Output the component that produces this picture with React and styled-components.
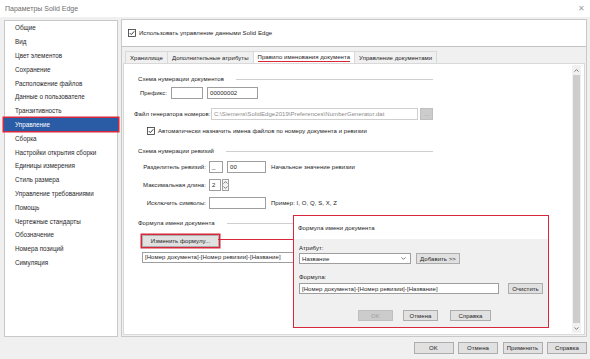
import React from "react";
import styled, { createGlobalStyle } from "styled-components";

const Global = createGlobalStyle`
  html, body { margin: 0; padding: 0; background: #f0f0f0; }
  body { font-family: "Liberation Sans", Arial, sans-serif; font-size: 6px; letter-spacing: 0.06px; color: #1a1a1a; }
  * { box-sizing: border-box; }
`;

const RED = "#d8263a";

const Window = styled.div`
  position: relative;
  width: 590px;
  height: 359px;
  background: #f0f0f0;
  display: flex;
  flex-direction: column;
  overflow: hidden;
`;

const TitleBar = styled.div`
  height: 17px;
  flex: none;
  background: #fff;
  display: flex;
  align-items: center;
  justify-content: space-between;
  padding: 0 5px;
  color: #6e6e6e;
  font-size: 7px;
  letter-spacing: 0;
`;

const Close = styled.span`
  font-size: 8px;
  color: #a0a0a0;
`;

const Body = styled.div`
  display: flex;
  gap: 3px;
  padding: 2px 3px 0 4px;
  height: 320px;
  flex: none;
`;

const NavList = styled.div`
  width: 114px;
  margin-top: 1px;
  background: #fff;
  border: 1px solid #c9c9c9;
  display: flex;
  flex-direction: column;
  font-size: 6.3px;
  letter-spacing: 0;
`;

const NavItem = styled.div`
  height: 13.8px;
  flex: none;
  display: flex;
  align-items: center;
  color: ${(p) => (p.$active ? "#fff" : "#2a2a2a")};
  background: ${(p) => (p.$active ? "#2a5ca6" : "transparent")};
  box-shadow: ${(p) => (p.$active ? `0 0 0 1.5px ${RED}` : "none")};
  margin: ${(p) => (p.$active ? "0 -1px" : "0")};
  padding-left: ${(p) => (p.$active ? "11px" : "10px")};
`;

const RightCol = styled.div`
  flex: 1;
  display: flex;
  flex-direction: column;
  border: 1px solid #c9c9c9;
  background: #f0f0f0;
`;

const TopBox = styled.div`
  height: 27px;
  flex: none;
  background: #fff;
  border-bottom: 1px solid #c2c2c2;
  display: flex;
  align-items: center;
  padding-left: 6px;
  gap: 3px;
`;

const TabRow = styled.div`
  display: flex;
  height: 12px;
  margin: 4px 0 0 3px;
  flex: none;
`;

const Tab = styled.div`
  display: flex;
  align-items: center;
  padding: 0 4px;
  border: 1px solid #d9d9d9;
  border-bottom: none;
  margin-right: -1px;
  background: ${(p) => (p.$active ? "#fff" : "#f0f0f0")};
  white-space: nowrap;
  span {
    border-bottom: ${(p) => (p.$active ? `1.5px solid ${RED}` : "none")};
    line-height: 8px;
  }
`;

const TabPanel = styled.div`
  flex: 1;
  margin: 0 1px 1px 1px;
  background: #fff;
  border: 1px solid #d9d9d9;
  display: flex;
`;

const Content = styled.div`
  flex: 1;
  padding: 11px 0 0 14px;
  display: flex;
  flex-direction: column;
`;

const Group = styled.div`
  width: 295px;
  height: 8px;
  margin-top: ${(p) => p.$mt || 0}px;
  display: flex;
  align-items: center;
  white-space: nowrap;
  &::after {
    content: "";
    flex: 1;
    height: 1px;
    margin-left: 12px;
    background: #cfcfcf;
  }
`;

const Row = styled.div`
  display: flex;
  align-items: center;
  height: ${(p) => p.$h || 12}px;
  margin-top: ${(p) => p.$mt || 0}px;
  margin-left: ${(p) => p.$ml || 0}px;
  gap: ${(p) => p.$gap || 0}px;
  white-space: nowrap;
`;

const Label = styled.div`
  width: ${(p) => p.$w}px;
  flex: none;
  text-align: ${(p) => (p.$right ? "right" : "left")};
  padding-right: ${(p) => (p.$right ? 3 : 0)}px;
`;

const Input = styled.div`
  width: ${(p) => p.$w}px;
  height: ${(p) => p.$h || 12}px;
  flex: none;
  background: #fff;
  border: 1px solid ${(p) => (p.$disabled ? "#cfcfcf" : "#9e9e9e")};
  color: ${(p) => (p.$disabled ? "#8a8a8a" : "#1e1e1e")};
  display: flex;
  align-items: center;
  padding-left: 2px;
  overflow: hidden;
  white-space: nowrap;
`;

const Button = styled.div`
  width: ${(p) => p.$w}px;
  height: ${(p) => p.$h || 12}px;
  flex: none;
  display: flex;
  align-items: center;
  justify-content: center;
  background: ${(p) => (p.$disabled ? "#cccccc" : "#e1e1e1")};
  color: ${(p) => (p.$disabled ? "#a0a0a0" : "#1e1e1e")};
  border: 1px solid ${(p) => (p.$disabled ? "#bfbfbf" : "#adadad")};
  box-shadow: ${(p) => (p.$marked ? `0 0 0 1.5px ${RED}` : "none")};
  white-space: nowrap;
`;

const Spin = styled.div`
  width: 7px;
  height: 12px;
  margin-left: 1px;
  border: 1px solid #9e9e9e;
  background: #f4f4f4;
  display: flex;
  flex-direction: column;
  align-items: center;
  justify-content: space-around;
`;

const Scrollbar = styled.div`
  width: 9px;
  margin: 1px 3px 1px 0;
  background: #f0f0f0;
  display: flex;
  flex-direction: column;
  align-items: center;
`;

const ScrollArrow = styled.div`
  height: 10px;
  flex: none;
  display: flex;
  align-items: center;
  justify-content: center;
`;

const Thumb = styled.div`
  flex: 1;
  width: 7px;
  background: #cdcdcd;
`;

const Footer = styled.div`
  display: flex;
  justify-content: flex-end;
  gap: 4.5px;
  padding: 5px 3px 0 0;
`;

const Dialog = styled.div`
  position: absolute;
  left: 293px;
  top: 215px;
  width: 256px;
  height: 113px;
  border: 1.5px solid ${RED};
  background: #f0f0f0;
  display: flex;
  flex-direction: column;
`;

const DialogTitle = styled.div`
  height: 23px;
  flex: none;
  background: #fff;
  display: flex;
  align-items: center;
  padding-left: 4px;
`;

const DialogBody = styled.div`
  padding-left: 5px;
  display: flex;
  flex-direction: column;
`;

const Select = styled(Input)`
  justify-content: space-between;
  padding-right: 4px;
`;

const Connector = styled.div`
  position: absolute;
  left: 218px;
  top: 238.5px;
  width: 76px;
  height: 1.5px;
  background: ${RED};
`;

function CheckBox() {
  return (
    <svg width="8" height="8" viewBox="0 0 8 8">
      <rect x="0.5" y="0.5" width="7" height="7" fill="#fff" stroke="#333" strokeWidth="0.8" />
      <path d="M1.8 4.1 L3.3 5.6 L6.3 2.3" fill="none" stroke="#222" strokeWidth="0.9" />
    </svg>
  );
}

function Chevron({ up }) {
  return (
    <svg width="5" height="3" viewBox="0 0 5 3">
      <path d={up ? "M0.5 2.6 L2.5 0.6 L4.5 2.6" : "M0.5 0.4 L2.5 2.4 L4.5 0.4"} fill="none" stroke="#606060" strokeWidth="0.8" />
    </svg>
  );
}

const navItems = [
  "Общие",
  "Вид",
  "Цвет элементов",
  "Сохранение",
  "Расположение файлов",
  "Данные о пользователе",
  "Транзитивность",
  "Управление",
  "Сборка",
  "Настройки открытия сборки",
  "Единицы измерения",
  "Стиль размера",
  "Управление требованиями",
  "Помощь",
  "Чертежные стандарты",
  "Обозначение",
  "Номера позиций",
  "Симуляция",
];

const tabs = [
  "Хранилище",
  "Дополнительные атрибуты",
  "Правило именования документа",
  "Управление документами",
];

export default function App() {
  return (
    <Window>
      <Global />
      <TitleBar>
        <span>Параметры Solid Edge</span>
        <Close>✕</Close>
      </TitleBar>
      <Body>
        <NavList>
          {navItems.map((n) => (
            <NavItem key={n} $active={n === "Управление"}>
              {n}
            </NavItem>
          ))}
        </NavList>
        <RightCol>
          <TopBox>
            <CheckBox />
            <span>Использовать управление данными Solid Edge</span>
          </TopBox>
          <TabRow>
            {tabs.map((t, i) => (
              <Tab key={t} $active={i === 2}>
                <span>{t}</span>
              </Tab>
            ))}
          </TabRow>
          <TabPanel>
            <Content>
              <Group>Схема нумерации документов</Group>
              <Row $mt={4} $ml={2}>
                <Label $w={31}>Префикс:</Label>
                <Input $w={32} />
                <Input $w={51} style={{ marginLeft: 4 }}>00000002</Input>
              </Row>
              <Row $mt={9} $ml={-4}>
                <Label $w={77}>Файл генератора номеров:</Label>
                <Input $w={207} $disabled>
                  C:\Siemens\SolidEdge2019\Preferences\NumberGenerator.dat
                </Input>
                <Button $w={13} $disabled style={{ marginLeft: 2 }}>
                  ...
                </Button>
              </Row>
              <Row $mt={7} $ml={9} $h={8} $gap={3}>
                <CheckBox />
                <span>Автоматически назначить имена файлов по номеру документа и ревизии</span>
              </Row>
              <Group $mt={12}>Схема нумерации ревизий</Group>
              <Row $mt={6} $ml={4}>
                <Label $w={67} $right>Разделитель ревизий:</Label>
                <Input $w={14}>_</Input>
                <Input $w={39} style={{ marginLeft: 4 }}>00</Input>
                <span style={{ marginLeft: 5 }}>Начальное значение ревизии</span>
              </Row>
              <Row $mt={6} $ml={4}>
                <Label $w={67} $right>Максимальная длина:</Label>
                <Input $w={12}>2</Input>
                <Spin>
                  <Chevron up />
                  <Chevron />
                </Spin>
              </Row>
              <Row $mt={6} $ml={4}>
                <Label $w={67} $right>Исключить символы:</Label>
                <Input $w={57} />
                <span style={{ marginLeft: 5 }}>Пример: I, O, Q, S, X, Z</span>
              </Row>
              <Group $mt={10}>Формула имени документа</Group>
              <Row $mt={8} $ml={4}>
                <Button $w={77} $marked>Изменить формулу...</Button>
              </Row>
              <Row $mt={4} $ml={4}>
                <Input $w={291} $h={11}>[Номер документа]-[Номер ревизии]-[Название]</Input>
              </Row>
            </Content>
            <Scrollbar>
              <ScrollArrow>
                <Chevron up />
              </ScrollArrow>
              <Thumb />
              <ScrollArrow>
                <Chevron />
              </ScrollArrow>
            </Scrollbar>
          </TabPanel>
        </RightCol>
      </Body>
      <Footer>
        <Button $w={40}>OK</Button>
        <Button $w={40}>Отмена</Button>
        <Button $w={40}>Применить</Button>
        <Button $w={40}>Справка</Button>
      </Footer>

      <Connector />
      <Dialog>
        <DialogTitle>Формула имени документа</DialogTitle>
        <DialogBody>
          <Row $mt={5} $h={8}>Атрибут:</Row>
          <Row $mt={1} $h={11} $gap={5}>
            <Select $w={112} $h={11}>
              <span>Название</span>
              <Chevron />
            </Select>
            <Button $w={44} $h={11}>Добавить &gt;&gt;</Button>
          </Row>
          <Row $mt={9} $h={8}>Формула:</Row>
          <Row $mt={2} $h={11} $gap={9}>
            <Input $w={200} $h={11}>[Номер документа]-[Номер ревизии]-[Название]</Input>
            <Button $w={35} $h={11}>Очистить</Button>
          </Row>
          <Row $mt={16} $h={11} $ml={59}>
            <Button $w={35} $h={11} $disabled>OK</Button>
            <Button $w={35} $h={11} style={{ marginLeft: 10 }}>Отмена</Button>
            <Button $w={41} $h={11} style={{ marginLeft: 12 }}>Справка</Button>
          </Row>
        </DialogBody>
      </Dialog>
    </Window>
  );
}
